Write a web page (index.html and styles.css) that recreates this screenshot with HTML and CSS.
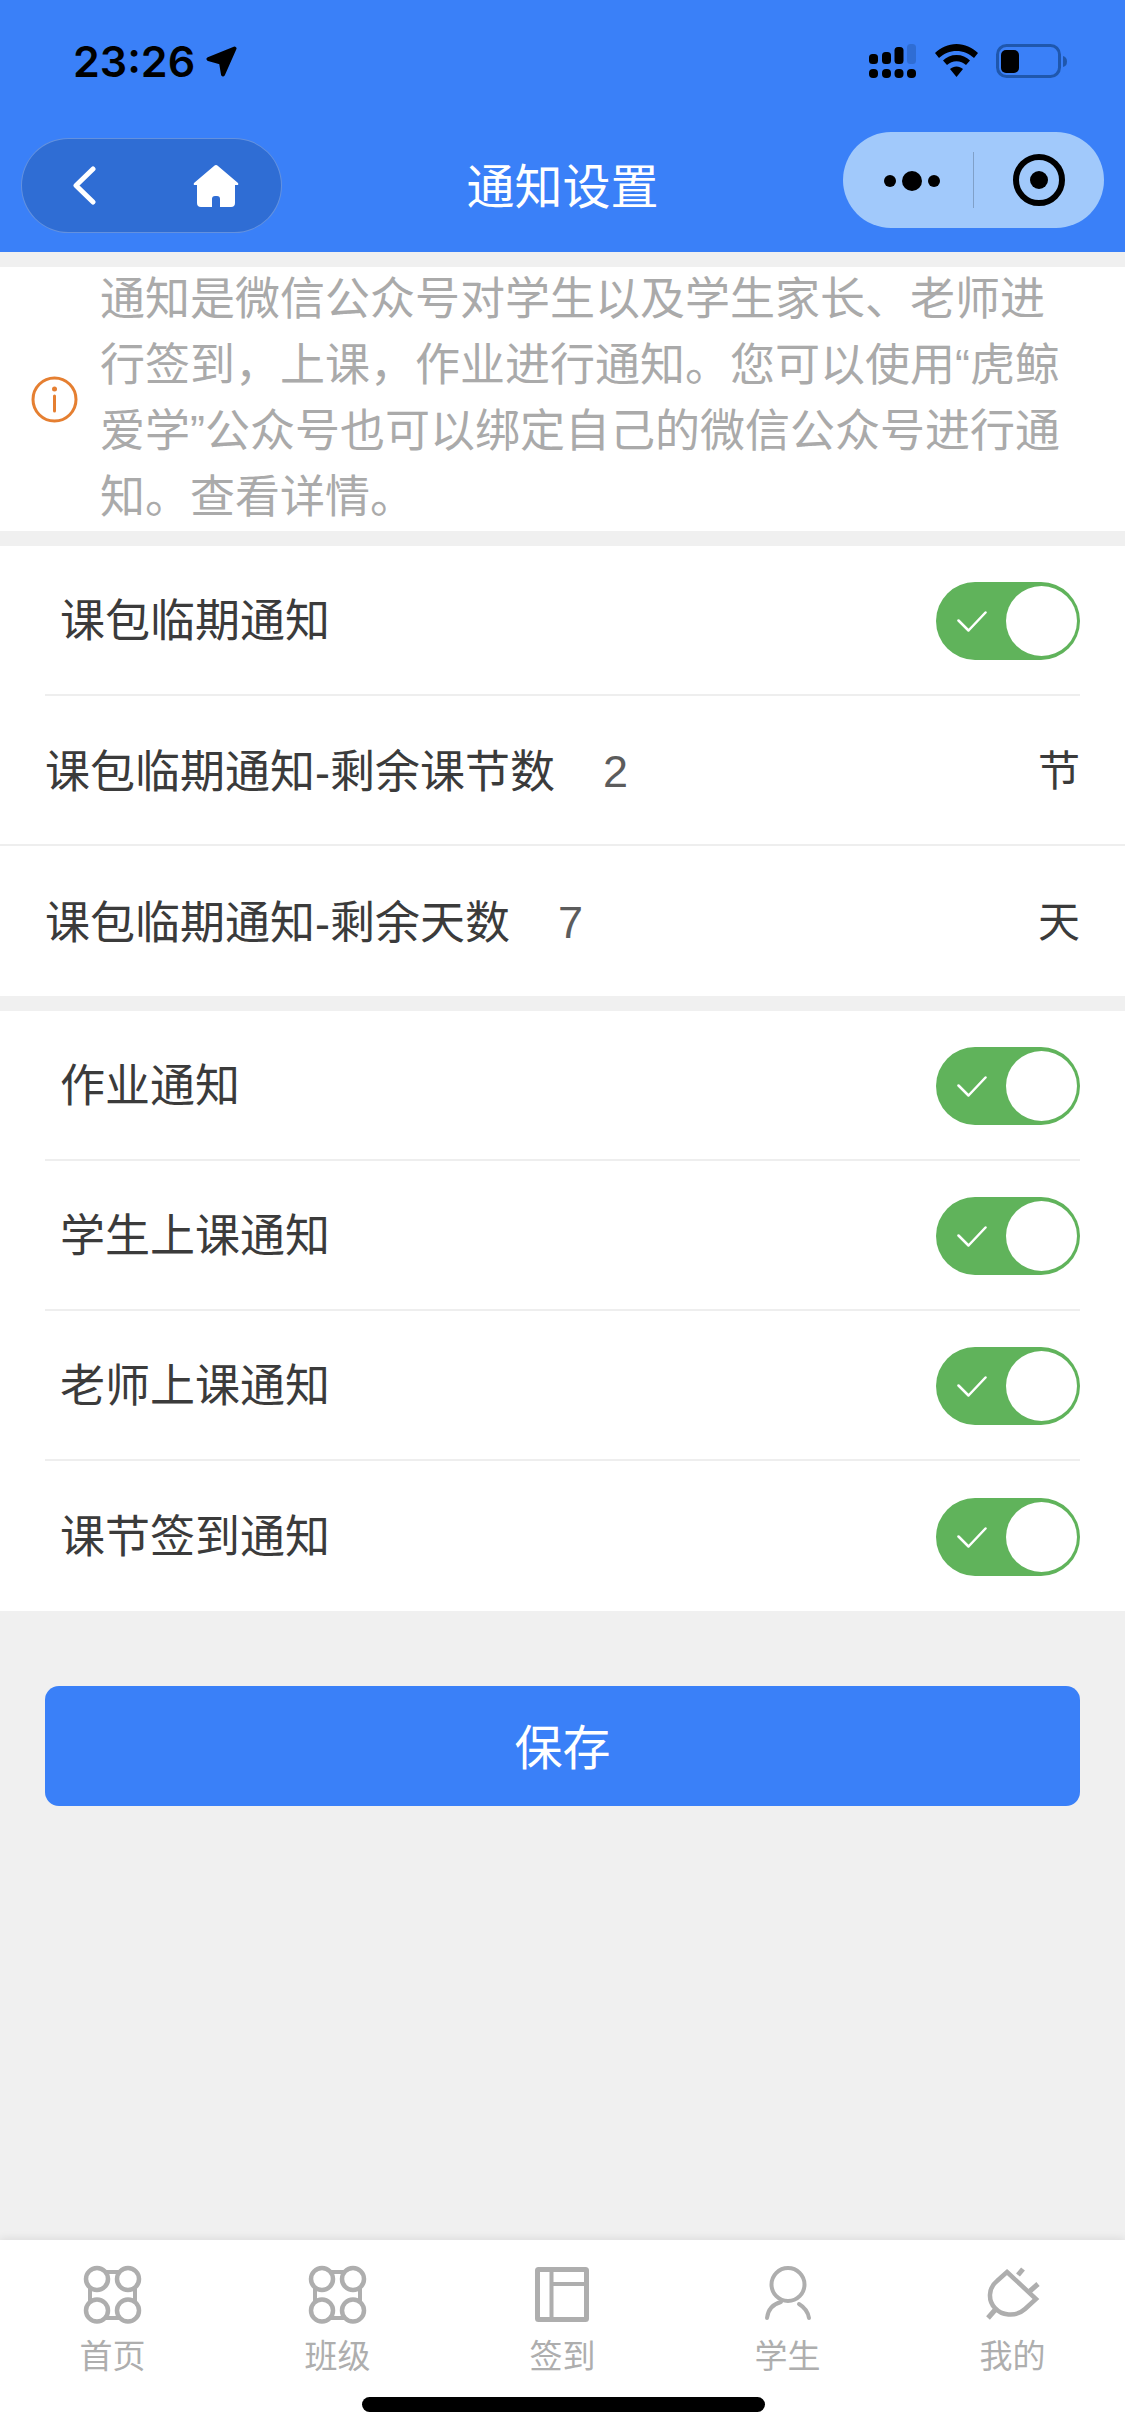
FILE: index.html
```html
<!DOCTYPE html>
<html lang="zh-CN">
<head>
  <meta charset="utf-8">
  <title>通知设置</title>
  <link rel="stylesheet" href="styles.css">
</head>
<body>
  <div class="page">
    <header class="header">
      <div class="status-bar">
        <div class="status-left">
          <span class="time">23:26</span>
          <svg class="location" width="31" height="31" viewBox="0 0 31 31"><path d="M28.500 2.500L2.500 13L15 16.500L17 28.500Z" fill="#000" stroke="#000" stroke-width="4" stroke-linejoin="round"/></svg>
        </div>
        <div class="status-right">
          <svg class="signal" width="47" height="34" viewBox="0 0 47 34">
            <rect x="0" y="10" width="9" height="10" rx="3.5" fill="#000"/>
            <rect x="13" y="8" width="9" height="12" rx="3.5" fill="#000"/>
            <rect x="25.500" y="3" width="9" height="17" rx="3.5" fill="#000"/>
            <rect x="38" y="0" width="9" height="20" rx="3.5" fill="#2f6dd4"/>
            <rect x="0" y="25" width="9" height="9" rx="4" fill="#000"/>
            <rect x="13" y="25" width="9" height="9" rx="4" fill="#000"/>
            <rect x="25.500" y="25" width="9" height="9" rx="4" fill="#000"/>
            <rect x="38" y="25" width="9" height="9" rx="4" fill="#000"/>
          </svg>
          <svg class="wifi" width="43" height="33" viewBox="0 0 43 33">
            <path d="M21.5 0C13 0 6 3.500 0 9L4 14C9 9.500 15 7 21.500 7C28 7 34 9.500 39 14L43 9C37 3.500 30 0 21.500 0Z" fill="#000"/>
            <path d="M21.500 11C16 11 11.500 13 8 16.500L12 21C14.500 18.700 18 17.300 21.500 17.300C25 17.300 28.500 18.700 31 21L35 16.500C31.500 13 27 11 21.500 11Z" fill="#000"/>
            <path d="M21.500 22.500C19 22.500 17 23.500 15 25L21.500 33L28 25C26 23.500 24 22.500 21.500 22.500Z" fill="#000"/>
          </svg>
          <svg class="battery" width="71" height="34" viewBox="0 0 71 34">
            <rect x="1.500" y="1.500" width="62" height="31" rx="9" fill="none" stroke="#1f57ad" stroke-width="3"/>
            <rect x="5" y="6" width="18" height="23" rx="5" fill="#000"/>
            <path d="M67 12Q71 13 71 17.500Q71 22 67 23Z" fill="#1f57ad"/>
          </svg>
        </div>
      </div>
      <div class="nav-bar">
        <div class="nav-pill">
          <svg width="23" height="39" viewBox="0 0 23 39"><polyline points="20,3 3,19.500 20,36" fill="none" stroke="#fff" stroke-width="5" stroke-linecap="round" stroke-linejoin="round"/></svg>
          <svg width="46" height="42" viewBox="0 0 46 42"><path d="M23 0Q24 0 25 1L45 18Q46 20 44 20L42 20L42 38Q42 42 38 42L27 42L27 34Q27 31 24 31L22 31Q19 31 19 34L19 42L8 42Q4 42 4 38L4 20L2 20Q0 20 1 18L21 1Q22 0 23 0Z" fill="#fff"/></svg>
        </div>
        <h1 class="nav-title">通知设置</h1>
        <div class="capsule">
          <svg class="capsule-dots" width="56" height="20" viewBox="0 0 56 20">
            <circle cx="6" cy="10" r="6" fill="#000"/>
            <circle cx="28" cy="10" r="10" fill="#000"/>
            <circle cx="50" cy="10" r="6" fill="#000"/>
          </svg>
          <span class="capsule-divider"></span>
          <svg width="52" height="52" viewBox="0 0 52 52">
            <circle cx="26" cy="26" r="23" fill="none" stroke="#000" stroke-width="6"/>
            <circle cx="26" cy="26" r="9" fill="#000"/>
          </svg>
        </div>
      </div>
    </header>

    <main class="main">
      <section class="notice">
        <svg class="notice-icon" width="47" height="47" viewBox="0 0 47 47">
          <circle cx="23.500" cy="23.500" r="21.500" fill="none" stroke="#e57f31" stroke-width="3"/>
          <circle cx="23.500" cy="13" r="2.500" fill="#e57f31"/>
          <line x1="23.500" y1="20" x2="23.500" y2="35" stroke="#e57f31" stroke-width="3" stroke-linecap="round"/>
        </svg>
        <p class="notice-text">通知是微信公众号对学生以及学生家长、老师进行签到&#xFF0C;上课&#xFF0C;作业进行通知。您可以使用“虎鲸爱学”公众号也可以绑定自己的微信公众号进行通知。查看详情。</p>
      </section>

      <section class="group">
        <div class="row row-switch">
          <span class="row-label">课包临期通知</span>
          <span class="switch"><svg width="30" height="21" viewBox="0 0 30 21"><polyline points="1.500,9.500 11.500,19.500 28.500,1.500" fill="none" stroke="#fff" stroke-width="2.500" stroke-linecap="round" stroke-linejoin="round"/></svg><i class="knob"></i></span>
        </div>
        <div class="row row-input">
          <span class="row-label">课包临期通知-剩余课节数</span>
          <span class="row-value">2</span>
          <span class="row-unit">节</span>
        </div>
        <div class="row row-input">
          <span class="row-label">课包临期通知-剩余天数</span>
          <span class="row-value">7</span>
          <span class="row-unit">天</span>
        </div>
      </section>

      <section class="group">
        <div class="row row-switch">
          <span class="row-label">作业通知</span>
          <span class="switch"><svg width="30" height="21" viewBox="0 0 30 21"><polyline points="1.500,9.500 11.500,19.500 28.500,1.500" fill="none" stroke="#fff" stroke-width="2.500" stroke-linecap="round" stroke-linejoin="round"/></svg><i class="knob"></i></span>
        </div>
        <div class="row row-switch">
          <span class="row-label">学生上课通知</span>
          <span class="switch"><svg width="30" height="21" viewBox="0 0 30 21"><polyline points="1.500,9.500 11.500,19.500 28.500,1.500" fill="none" stroke="#fff" stroke-width="2.500" stroke-linecap="round" stroke-linejoin="round"/></svg><i class="knob"></i></span>
        </div>
        <div class="row row-switch">
          <span class="row-label">老师上课通知</span>
          <span class="switch"><svg width="30" height="21" viewBox="0 0 30 21"><polyline points="1.500,9.500 11.500,19.500 28.500,1.500" fill="none" stroke="#fff" stroke-width="2.500" stroke-linecap="round" stroke-linejoin="round"/></svg><i class="knob"></i></span>
        </div>
        <div class="row row-switch">
          <span class="row-label">课节签到通知</span>
          <span class="switch"><svg width="30" height="21" viewBox="0 0 30 21"><polyline points="1.500,9.500 11.500,19.500 28.500,1.500" fill="none" stroke="#fff" stroke-width="2.500" stroke-linecap="round" stroke-linejoin="round"/></svg><i class="knob"></i></span>
        </div>
      </section>

      <button class="save-button">保存</button>
    </main>

    <footer class="tabbar">
      <div class="tab">
        <svg class="tab-icon" width="75" height="72" viewBox="0 0 75 72">
          <path d="M22 14H52M15 21V53M60 21V53M22 60H52"/>
          <circle class="ring" cx="22" cy="21" r="11"/><circle class="ring" cx="53" cy="21" r="11"/>
          <circle class="ring" cx="22" cy="52.500" r="11"/><circle class="ring" cx="53" cy="52.500" r="11"/>
        </svg>
        <span class="tab-label">首页</span>
      </div>
      <div class="tab">
        <svg class="tab-icon" width="75" height="72" viewBox="0 0 75 72">
          <path d="M22 14H52M15 21V53M60 21V53M22 60H52"/>
          <circle class="ring" cx="22" cy="21" r="11"/><circle class="ring" cx="53" cy="21" r="11"/>
          <circle class="ring" cx="22" cy="52.500" r="11"/><circle class="ring" cx="53" cy="52.500" r="11"/>
        </svg>
        <span class="tab-label">班级</span>
      </div>
      <div class="tab">
        <svg class="tab-icon" width="75" height="72" viewBox="0 0 75 72">
          <rect x="12.500" y="11.500" width="49" height="50" rx="1" stroke-width="5"/>
          <path d="M26.500 11.500V61.500M26.500 26H61.500" stroke-width="4"/>
        </svg>
        <span class="tab-label">签到</span>
      </div>
      <div class="tab">
        <svg class="tab-icon" width="75" height="72" viewBox="0 0 75 72">
          <circle cx="38" cy="26.500" r="16.500"/>
          <path d="M17 60C18 52 23 46 31 44M49 46C54 49 58 54 59 60" stroke-linecap="round"/>
        </svg>
        <span class="tab-label">学生</span>
      </div>
      <div class="tab">
        <svg class="tab-icon" width="75" height="72" viewBox="0 0 75 72">
          <path d="M32 14L61 41L50 51C40 60 26 57 20 50C13 43 13 30 22 23Z" stroke-width="4.500"/>
          <path d="M43 17L48 11M55 33L63 26M20 52L13 60" stroke-width="5"/>
        </svg>
        <span class="tab-label">我的</span>
      </div>
      <span class="home-indicator"></span>
    </footer>
  </div>
</body>
</html>
```

FILE: styles.css
```css
* {
  box-sizing: border-box;
}
html, body {
  margin: 0;
  padding: 0;
}
body {
  font-family: "Liberation Sans", "Noto Sans CJK SC", sans-serif;
  color: #3b3b3b;
}
.page {
  width: 1125px;
  height: 2436px;
  display: flex;
  flex-direction: column;
  background: #f0f0f0;
  overflow: hidden;
}

/* header */
.header {
  height: 252px;
  padding: 0 21px;
  background: #3a80f8;
}
.status-bar {
  height: 132px;
  padding: 44px 37px 0 52px;
  display: flex;
  justify-content: space-between;
  align-items: flex-start;
}
.status-left {
  display: flex;
  align-items: center;
  height: 34px;
}
.time {
  font-family: Inter, sans-serif;
  font-size: 43px;
  font-weight: 600;
  line-height: 34px;
  color: #000;
}
.location {
  margin-left: 11px;
}
.status-right {
  display: flex;
  align-items: flex-start;
}
.wifi {
  margin-left: 19px;
}
.battery {
  margin-left: 18px;
}
.nav-bar {
  display: flex;
  align-items: flex-start;
}
.nav-pill {
  width: 261px;
  height: 95px;
  margin-top: 6px;
  padding-left: 51px;
  display: flex;
  align-items: center;
  gap: 97px;
  background: #2f6dd4;
  border: 1px solid rgba(255, 255, 255, 0.25);
  border-radius: 48px;
}
.nav-title {
  flex: 1;
  margin: 26px 0 0;
  font-size: 48px;
  font-weight: 400;
  line-height: 60px;
  text-align: center;
  color: #fff;
}
.capsule {
  width: 261px;
  height: 96px;
  display: flex;
  align-items: center;
  background: #a1c9fb;
  border-radius: 48px;
}
.capsule-dots {
  margin: 2px 33px 0 41px;
}
.capsule-divider {
  width: 1px;
  height: 56px;
  margin-right: 39px;
  background: rgba(0, 0, 0, 0.2);
}

/* content */
.main {
  flex: 1;
}
.notice {
  margin-top: 15px;
  padding: 0 45px 0 31px;
  display: flex;
  align-items: center;
  background: #fff;
}
.notice-icon {
  flex: none;
  margin-right: 22px;
}
.notice-text {
  margin: 0;
  font-size: 45px;
  line-height: 66px;
  color: #aaa;
}
.group {
  margin-top: 15px;
  background: #fff;
}
.row {
  height: 150px;
  display: flex;
  align-items: center;
  font-size: 45px;
}
.row-switch {
  margin: 0 45px;
  padding-left: 15px;
  justify-content: space-between;
  border-bottom: 2px solid #eee;
}
.row-switch .row-label {
  padding-bottom: 6px;
}
.row-input {
  padding: 0 45px;
  border-bottom: 2px solid #eee;
}
.row-input .row-label {
  padding-bottom: 3px;
}
.row:last-child {
  border-bottom: none;
}
.row-value {
  flex: 1;
  margin-left: 48px;
  padding-top: 3px;
  color: #5c5c5c;
}
.row-unit {
  padding-bottom: 5px;
  font-size: 42px;
}
.switch {
  position: relative;
  width: 144px;
  height: 78px;
  margin-top: 2px;
  padding: 0 0 0 21px;
  display: flex;
  align-items: center;
  background: #60b35b;
  border-radius: 39px;
}
.knob {
  position: absolute;
  top: 4px;
  right: 3px;
  width: 71px;
  height: 70px;
  background: #fff;
  border-radius: 50%;
}
.save-button {
  display: block;
  width: 1035px;
  height: 120px;
  margin: 75px 45px 0;
  padding: 0 0 5px;
  border: none;
  border-radius: 14px;
  background: #3a80f8;
  color: #fff;
  font-family: inherit;
  font-size: 48px;
}

/* bottom tabs */
.tabbar {
  position: relative;
  height: 196px;
  padding-top: 18px;
  display: flex;
  background: #fff;
  box-shadow: 0 -2px 8px rgba(0, 0, 0, 0.08);
}
.tab {
  flex: 1;
  display: flex;
  flex-direction: column;
  align-items: center;
}
.tab-icon {
  fill: none;
  stroke: #aeaeae;
  stroke-width: 4;
}
.tab-icon .ring {
  fill: #fff;
  stroke-width: 4.5;
}
.tab-label {
  margin-top: 7px;
  font-size: 33px;
  line-height: 40px;
  color: #aeaeae;
}
.home-indicator {
  position: absolute;
  left: 362px;
  bottom: 24px;
  width: 403px;
  height: 15px;
  background: #000;
  border-radius: 8px;
}
```
